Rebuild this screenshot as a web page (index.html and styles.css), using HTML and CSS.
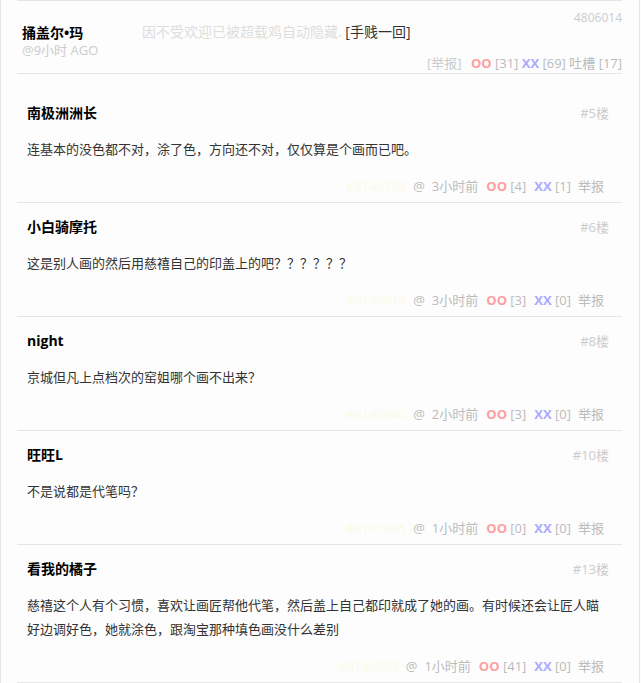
FILE: index.html
```
<!DOCTYPE html>
<html lang="zh-CN">
<head>
    <meta charset="UTF-8">
    <title>吐槽</title>
    <link rel="stylesheet" href="styles.css">
</head>
<body>
    <div class="wrap">
        <div class="post-head">
            <div class="author">
                <div class="author-name">捅盖尔•玛</div>
                <div class="author-time">@9小时 AGO</div>
            </div>
            <div class="hidden-note">因不受欢迎已被超载鸡自动隐藏. <a href="#" class="show-link">[手贱一回]</a></div>
            <div class="head-right">
                <div class="post-id">4806014</div>
                <div class="post-actions">
                    <span class="report">[举报]</span>
                    <span class="oo">OO</span> [31]
                    <span class="xx">XX</span> [69]
                    <span class="tucao">吐槽 [17]</span>
                </div>
            </div>
        </div>

        <div class="comments">
            <div class="comment">
                <div class="comment-top">
                    <span class="comment-name">南极洲洲长</span>
                    <span class="floor">#5楼</span>
                </div>
                <div class="comment-text">连基本的没色都不对，涂了色，方向还不对，仅仅算是个画而已吧。</div>
                <div class="comment-foot">
                    <span class="cid">#8145799</span>
                    <span class="at">@</span>
                    <span class="time">3小时前</span>
                    <span class="vote"><span class="oo">OO</span> [4]</span>
                    <span class="vote"><span class="xx">XX</span> [1]</span>
                    <span class="rep">举报</span>
                </div>
            </div>
            <div class="comment">
                <div class="comment-top">
                    <span class="comment-name">小白骑摩托</span>
                    <span class="floor">#6楼</span>
                </div>
                <div class="comment-text">这是别人画的然后用慈禧自己的印盖上的吧？？？？？？</div>
                <div class="comment-foot">
                    <span class="cid">#8145814</span>
                    <span class="at">@</span>
                    <span class="time">3小时前</span>
                    <span class="vote"><span class="oo">OO</span> [3]</span>
                    <span class="vote"><span class="xx">XX</span> [0]</span>
                    <span class="rep">举报</span>
                </div>
            </div>
            <div class="comment">
                <div class="comment-top">
                    <span class="comment-name">night</span>
                    <span class="floor">#8楼</span>
                </div>
                <div class="comment-text">京城但凡上点档次的窑姐哪个画不出来？</div>
                <div class="comment-foot">
                    <span class="cid">#8145840</span>
                    <span class="at">@</span>
                    <span class="time">2小时前</span>
                    <span class="vote"><span class="oo">OO</span> [3]</span>
                    <span class="vote"><span class="xx">XX</span> [0]</span>
                    <span class="rep">举报</span>
                </div>
            </div>
            <div class="comment">
                <div class="comment-top">
                    <span class="comment-name">旺旺L</span>
                    <span class="floor">#10楼</span>
                </div>
                <div class="comment-text">不是说都是代笔吗？</div>
                <div class="comment-foot">
                    <span class="cid">#8145905</span>
                    <span class="at">@</span>
                    <span class="time">1小时前</span>
                    <span class="vote"><span class="oo">OO</span> [0]</span>
                    <span class="vote"><span class="xx">XX</span> [0]</span>
                    <span class="rep">举报</span>
                </div>
            </div>
            <div class="comment">
                <div class="comment-top">
                    <span class="comment-name">看我的橘子</span>
                    <span class="floor">#13楼</span>
                </div>
                <div class="comment-text">慈禧这个人有个习惯，喜欢让画匠帮他代笔，然后盖上自己都印就成了她的画。有时候还会让匠人瞄好边调好色，她就涂色，跟淘宝那种填色画没什么差别</div>
                <div class="comment-foot">
                    <span class="cid">#8146003</span>
                    <span class="at">@</span>
                    <span class="time">1小时前</span>
                    <span class="vote"><span class="oo">OO</span> [41]</span>
                    <span class="vote"><span class="xx">XX</span> [0]</span>
                    <span class="rep">举报</span>
                </div>
            </div>
        </div>
    </div>
</body>
</html>
```

FILE: styles.css
```
body {
    margin: 0;
    background-color: #fdfdfd;
    font-family: "Open Sans", "Noto Sans CJK SC", sans-serif;
    font-size: 13px;
    color: #333;
}
.wrap {
    width: 605px;
    padding: 0 17px 0 16px;
    border-left: 1px solid #e4e4e4;
    border-right: 1px solid #e4e4e4;
    min-height: 683px;
}

/* header of the post */
.post-head {
    display: flex;
    height: 72px;
    border-top: 1px solid #e6e6e6;
    border-bottom: 1px solid #e6e6e6;
}
.author {
    width: 120px;
    padding: 23px 0 0 5px;
}
.author-name {
    font-size: 14px;
    font-weight: bold;
    color: #000;
    line-height: 18px;
}
.author-time {
    color: #ccc;
    line-height: 16px;
}
.hidden-note {
    flex: 1;
    padding-top: 22px;
    font-size: 14px;
    line-height: 18px;
    color: #ddd;
}
.show-link {
    color: #333;
    text-decoration: none;
}
.head-right {
    display: flex;
    flex-direction: column;
    justify-content: space-between;
    align-items: flex-end;
    padding: 9px 0 2px;
    line-height: 16px;
    color: #bbb;
}
.post-id {
    font-size: 12px;
    color: #ccc;
}
.report {
    color: #ccc;
    margin-right: 6px;
}
.tucao {
    color: #bbb;
}
.oo {
    color: #ff9f9f;
    font-weight: bold;
}
.xx {
    color: #aaaaff;
    font-weight: bold;
}

/* comments */
.comments {
    margin-top: 15px;
}
.comment {
    padding: 14px 13px 8px 10px;
    border-bottom: 1px solid #e6e6e6;
}
.comment-top {
    display: flex;
    justify-content: space-between;
    line-height: 20px;
}
.comment-name {
    font-size: 14px;
    font-weight: bold;
    color: #000;
}
.floor {
    color: #ccc;
}
.comment-text {
    margin-top: 14px;
    line-height: 24px;
    color: #333;
}
.comment-foot {
    display: flex;
    justify-content: flex-end;
    margin-top: 17px;
    margin-right: 5px;
    line-height: 16px;
    white-space: pre;
    color: #bbb;
}
.cid {
    color: #fbfbe6;
}
.at {
    margin-left: 7px;
}
.time {
    margin-left: 7px;
}
.vote {
    margin-left: 8px;
}
.rep {
    margin-left: 7px;
}
```
